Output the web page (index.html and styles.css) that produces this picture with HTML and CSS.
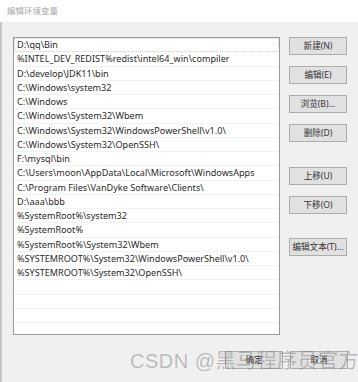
FILE: index.html
```html
<!DOCTYPE html>
<html lang="zh-CN">
<head>
  <meta charset="UTF-8" />
  <title>编辑环境变量</title>
  <link rel="stylesheet" href="styles.css">
</head>
<body>
  <div class="window">
    <div class="titlebar">编辑环境变量</div>

    <div class="content">
      <div class="main">
        <ul class="path-list">
          <li class="row focused">D:\qq\Bin</li>
          <li class="row">%INTEL_DEV_REDIST%redist\intel64_win\compiler</li>
          <li class="row">D:\develop\JDK11\bin</li>
          <li class="row">C:\Windows\system32</li>
          <li class="row">C:\Windows</li>
          <li class="row">C:\Windows\System32\Wbem</li>
          <li class="row">C:\Windows\System32\WindowsPowerShell\v1.0\</li>
          <li class="row">C:\Windows\System32\OpenSSH\</li>
          <li class="row">F:\mysql\bin</li>
          <li class="row">C:\Users\moon\AppData\Local\Microsoft\WindowsApps</li>
          <li class="row">C:\Program Files\VanDyke Software\Clients\</li>
          <li class="row">D:\aaa\bbb</li>
          <li class="row">%SystemRoot%\system32</li>
          <li class="row">%SystemRoot%</li>
          <li class="row">%SystemRoot%\System32\Wbem</li>
          <li class="row">%SYSTEMROOT%\System32\WindowsPowerShell\v1.0\</li>
          <li class="row">%SYSTEMROOT%\System32\OpenSSH\</li>
          <li class="row"></li>
          <li class="row"></li>
          <li class="row"></li>
          <li class="row"></li>
        </ul>

        <div class="side">
          <div class="group">
            <button class="btn">新建(N)</button>
            <button class="btn">编辑(E)</button>
            <button class="btn">浏览(B)...</button>
            <button class="btn">删除(D)</button>
          </div>
          <div class="group move">
            <button class="btn">上移(U)</button>
            <button class="btn">下移(O)</button>
          </div>
          <div class="group text-edit">
            <button class="btn">编辑文本(T)...</button>
          </div>
        </div>
      </div>

      <div class="footer">
        <button class="btn">确定</button>
        <button class="btn">取消</button>
      </div>
    </div>

    <div class="watermark">CSDN @黑马程序员官方</div>
  </div>
</body>
</html>
```

FILE: styles.css
```css
* {
  box-sizing: border-box;
}

body {
  margin: 0;
  background: #f0f0f0;
  font-family: "Noto Sans", "Noto Sans CJK SC", sans-serif;
}

.window {
  position: relative;
  width: 358px;
  height: 382px;
  background: #f0f0f0;
  overflow: hidden;
}

.titlebar {
  height: 22px;
  background: #ffffff;
  color: #a8a8a8;
  font-size: 8.5px;
  line-height: 22px;
  padding-left: 7px;
}

.content {
  height: 360px;
  border-left: 2px solid #c4c4c4;
  padding: 15px 10px 0 11px;
}

.main {
  display: flex;
  align-items: flex-start;
}

.path-list {
  list-style: none;
  margin: 0;
  padding: 0;
  width: 267px;
  height: 298px;
  background: #ffffff;
  border: 1px solid #9a9a9a;
  overflow: hidden;
}

.row {
  height: 14.25px;
  line-height: 13px;
  padding-left: 3px;
  font-size: 9.1px;
  color: #2a2a2a;
  white-space: nowrap;
  border-bottom: 1px solid #f2f2f2;
}

.row.focused {
  outline: 1px dotted #d6d6d6;
  outline-offset: -1px;
}

.side {
  margin-left: 9px;
  width: 58px;
  display: flex;
  flex-direction: column;
}

.group {
  display: flex;
  flex-direction: column;
  gap: 11px;
}

.group.move {
  margin-top: 25px;
}

.group.text-edit {
  margin-top: 24px;
}

.btn {
  width: 58px;
  height: 18px;
  padding: 0;
  margin: 0;
  background: #e1e1e1;
  border: 1px solid #adadad;
  color: #333;
  font-family: "Noto Sans", "Noto Sans CJK SC", sans-serif;
  font-size: 8.6px;
  line-height: 16px;
  white-space: nowrap;
}

.footer {
  display: flex;
  justify-content: flex-end;
  gap: 7px;
  margin-top: 16px;
}

.watermark {
  position: absolute;
  left: 130px;
  top: 347px;
  font-family: "Liberation Sans", "Noto Sans CJK SC", sans-serif;
  font-size: 20px;
  line-height: 28px;
  color: rgba(120, 120, 120, 0.45);
  letter-spacing: 0.5px;
  white-space: nowrap;
}
```
